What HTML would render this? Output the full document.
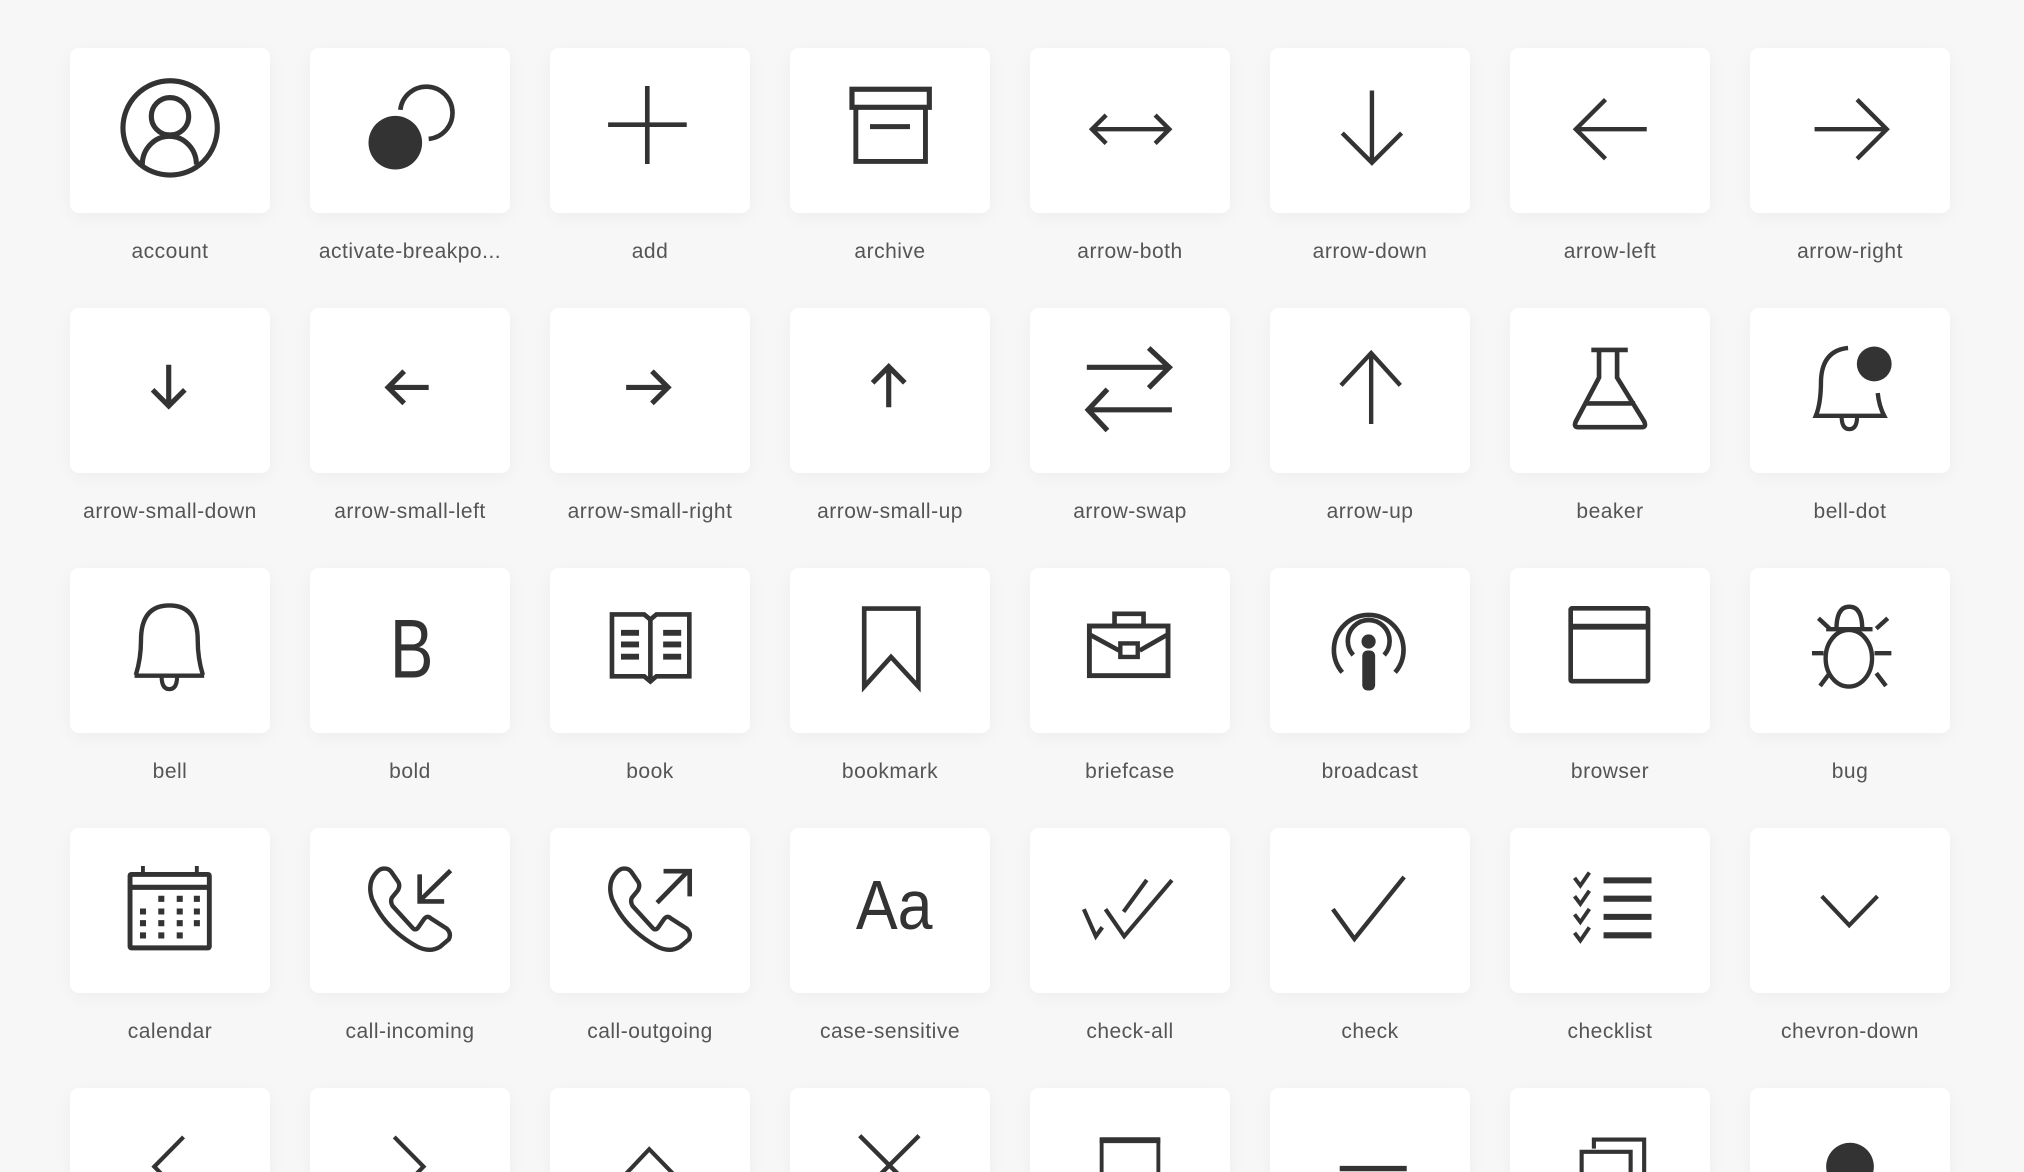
<!DOCTYPE html>
<html><head><meta charset="utf-8"><style>
html,body{margin:0;padding:0;width:2024px;height:1172px;overflow:hidden;}
body{background:#f7f7f7;font-family:"Liberation Sans",sans-serif;}
#wrap{position:relative;width:2024px;height:1172px;overflow:hidden;}
.t{position:absolute;width:200px;height:165px;background:#fff;border-radius:9px;box-shadow:0 4px 18px rgba(0,0,0,0.045);}
.t svg{position:absolute;left:0;top:0;width:200px;height:165px;}
.l{position:absolute;width:240px;margin-left:-20px;text-align:center;font-size:21px;letter-spacing:0.5px;color:#555;top:191px;left:0;line-height:26px;white-space:nowrap;}
svg{fill:none;stroke:#333;stroke-width:3.4;stroke-linecap:butt;stroke-linejoin:miter;overflow:visible;}
.f{fill:#333;stroke:none;}
.p{height:84px;border-radius:9px 9px 0 0;overflow:hidden;}
.p svg{overflow:hidden;}
</style></head><body><div id="wrap">

<!-- Row 1 -->
<div class="t" style="left:70px;top:48px"><svg viewBox="0 0 155 128"><circle cx="77.6" cy="62" r="36.6" stroke-width="4"/><circle cx="77.5" cy="53" r="14.5" stroke-width="4"/><path d="M56 90.5 A21 22 0 0 1 98 90.5" stroke-width="4"/></svg><div class="l">account</div></div>
<div class="t" style="left:310px;top:48px"><svg viewBox="0 0 155 128"><circle class="f" cx="66.1" cy="73.5" r="20.8"/><path d="M70 48 A20.3 20.3 0 1 1 92 70.5" stroke-width="3.6"/></svg><div class="l">activate-breakpo...</div></div>
<div class="t" style="left:550px;top:48px"><svg viewBox="0 0 155 128"><path d="M75.4 29.5V90M45 59.5H106" stroke-width="3.6"/></svg><div class="l">add</div></div>
<div class="t" style="left:790px;top:48px"><svg viewBox="0 0 155 128"><rect x="48" y="32" width="60" height="14" stroke-width="4"/><path d="M51 46V88H105V46M62 61H93" stroke-width="3.8"/></svg><div class="l">archive</div></div>
<div class="t" style="left:1030px;top:48px"><svg viewBox="0 0 155 128"><path d="M48 63H108M59 52L48 63L59 74M97 52L108 63L97 74" stroke-width="3.4"/></svg><div class="l">arrow-both</div></div>
<div class="t" style="left:1270px;top:48px"><svg viewBox="0 0 155 128"><path d="M79 33V89M56 66L79 89L102 66" stroke-width="3.4"/></svg><div class="l">arrow-down</div></div>
<div class="t" style="left:1510px;top:48px"><svg viewBox="0 0 155 128"><path d="M51 63H106M74 40L51 63L74 86" stroke-width="3.4"/></svg><div class="l">arrow-left</div></div>
<div class="t" style="left:1750px;top:48px"><svg viewBox="0 0 155 128"><path d="M50 63H106M83 40L106 63L83 86" stroke-width="3.4"/></svg><div class="l">arrow-right</div></div>

<!-- Row 2 -->
<div class="t" style="left:70px;top:308px"><svg viewBox="0 0 155 128"><path d="M76.5 44V76.5M64 63.5L76.5 76L89 63.5" stroke-width="4"/></svg><div class="l">arrow-small-down</div></div>
<div class="t" style="left:310px;top:308px"><svg viewBox="0 0 155 128"><path d="M60 61.6H92M73 49L60.5 61.6L73 74" stroke-width="4"/></svg><div class="l">arrow-small-left</div></div>
<div class="t" style="left:550px;top:308px"><svg viewBox="0 0 155 128"><path d="M59 61.6H91M79 49L91.5 61.6L79 74" stroke-width="4"/></svg><div class="l">arrow-small-right</div></div>
<div class="t" style="left:790px;top:308px"><svg viewBox="0 0 155 128"><path d="M76.5 45V77M64 58L76.5 45.5L89 58" stroke-width="4"/></svg><div class="l">arrow-small-up</div></div>
<div class="t" style="left:1030px;top:308px"><svg viewBox="0 0 155 128"><path d="M44 46H108M92 31L108 46L92 62M110 79H45M60 63L45 79L60 95" stroke-width="4"/></svg><div class="l">arrow-swap</div></div>
<div class="t" style="left:1270px;top:308px"><svg viewBox="0 0 155 128"><path d="M78.4 35V90M55 60L78.4 35L101 60" stroke-width="3.4"/></svg><div class="l">arrow-up</div></div>
<div class="t" style="left:1510px;top:308px"><svg viewBox="0 0 155 128"><path d="M63 32.5H91.3M69 34V54L51 88Q49 92.5 53 92.5H102Q106 92.5 104 88L83 54V34M58 74H97" stroke-width="3.6"/></svg><div class="l">beaker</div></div>
<div class="t" style="left:1750px;top:308px"><svg viewBox="0 0 155 128"><path d="M76 31Q56 33 55 56Q55 74 51 83.6H104Q100 76 99 66" stroke-width="3.4"/><path d="M71 84Q71 94 77 94Q83 94 83 84" stroke-width="3.2"/><circle class="f" cx="96.3" cy="43.4" r="13.5"/></svg><div class="l">bell-dot</div></div>

<!-- Row 3 -->
<div class="t" style="left:70px;top:568px"><svg viewBox="0 0 155 128"><path d="M50 83.5H104M51 83Q55 70 55 56Q55 29 77 29Q99 29 99 56Q99 70 103 83" stroke-width="3.4"/><path d="M71 84Q71 94 77 94Q83 94 83 84" stroke-width="3.2"/></svg><div class="l">bell</div></div>
<div class="t" style="left:310px;top:568px"><svg viewBox="0 0 155 128"><text x="101" y="85" transform="scale(0.78 1)" text-anchor="middle" font-family="Liberation Sans, sans-serif" font-size="65" fill="#333" stroke="none">B</text></svg><div class="l">bold</div></div>
<div class="t" style="left:550px;top:568px"><svg viewBox="0 0 155 128"><path d="M48 36H73L77.8 40L82.5 36H108V84H82.5L77.8 88L73 84H48Z M77.8 40V88" stroke-width="3.6"/><path class="f" d="M55 48h14v4.6h-14zM55 57h14v4.6h-14zM55 66.5h14v4.6h-14zM87.7 48h14v4.6h-14zM87.7 57h14v4.6h-14zM87.7 66.5h14v4.6h-14z"/></svg><div class="l">book</div></div>
<div class="t" style="left:790px;top:568px"><svg viewBox="0 0 155 128"><path d="M57.5 92V31.5H99.5V92L78.3 69Z" stroke-width="3.6"/></svg><div class="l">bookmark</div></div>
<div class="t" style="left:1030px;top:568px"><svg viewBox="0 0 155 128"><rect x="46" y="45" width="61" height="38.5" stroke-width="3.8"/><path d="M65.5 45V35.5H88V45M47 52L69 64M106 52L85 64" stroke-width="3.6"/><rect x="70" y="58.5" width="13.5" height="10.5" stroke-width="3.4"/></svg><div class="l">briefcase</div></div>
<div class="t" style="left:1270px;top:568px"><svg viewBox="0 0 155 128"><path d="M56 81A27 27 0 1 1 97 81" stroke-width="3.6"/><path d="M64.5 67.5A16.2 16.2 0 1 1 88.5 67.5" stroke-width="3.6"/><circle class="f" cx="76.4" cy="57" r="5.5"/><rect class="f" x="71.5" y="64" width="10" height="31" rx="4"/></svg><div class="l">broadcast</div></div>
<div class="t" style="left:1510px;top:568px"><svg viewBox="0 0 155 128"><rect x="47" y="31.3" width="60" height="56.5" rx="1" stroke-width="3.6"/><path d="M47 45.5H107" stroke-width="4.6"/></svg><div class="l">browser</div></div>
<div class="t" style="left:1750px;top:568px"><svg viewBox="0 0 155 128"><ellipse cx="76.6" cy="70" rx="18" ry="22" stroke-width="3.4"/><path d="M67 47.5Q67 30 77 30Q87 30 87 47.5M59 47.5H95M53 39L61.7 47M106.8 39L97.9 47M48 66.1H57M96.5 66.1H109.6M61.7 81.6L54.3 91.5M97.9 81.6L105.4 91.5" stroke-width="3.4"/></svg><div class="l">bug</div></div>

<!-- Row 4 -->
<div class="t" style="left:70px;top:828px"><svg viewBox="0 0 155 128"><rect x="46.5" y="36" width="61.5" height="57" rx="1" stroke-width="3.8"/><path d="M47 46H108" stroke-width="4"/><path d="M56.5 29.5V36M98.3 29.5V36" stroke-width="3"/><path class="f" d="M68.4 52.6h4.7v4.7h-4.7zM82.7 52.6h4.7v4.7h-4.7zM96 52.6h4.7v4.7h-4.7zM54.2 62.4h4.7v4.7h-4.7zM68.4 62.4h4.7v4.7h-4.7zM82.7 62.4h4.7v4.7h-4.7zM96 62.4h4.7v4.7h-4.7zM54.2 71.5h4.7v4.7h-4.7zM68.4 71.5h4.7v4.7h-4.7zM82.7 71.5h4.7v4.7h-4.7zM96 71.5h4.7v4.7h-4.7zM54.2 81h4.7v4.7h-4.7zM68.4 81h4.7v4.7h-4.7zM82.7 81h4.7v4.7h-4.7z"/></svg><div class="l">calendar</div></div>
<div class="t" style="left:310px;top:828px"><svg viewBox="0 0 155 128"><path d="M58 31.5Q61 31.5 63 34L68.5 42Q70 45 68 48.5L63.5 54Q62 57 64 60.5L79.5 77.5Q82 80 84 77L88.5 70.5Q91 67.5 93.5 70L106 78Q110 82 107.5 86.5L101 92Q93 97 83 92Q58 78 48 55Q44 42 52 34Q55 31 58 31.5Z" stroke-width="3.4" stroke-linejoin="round"/><path d="M109 33L86.5 55M85 36V57H104" stroke-width="3.6"/></svg><div class="l">call-incoming</div></div>
<div class="t" style="left:550px;top:828px"><svg viewBox="0 0 155 128"><path d="M58 31.5Q61 31.5 63 34L68.5 42Q70 45 68 48.5L63.5 54Q62 57 64 60.5L79.5 77.5Q82 80 84 77L88.5 70.5Q91 67.5 93.5 70L106 78Q110 82 107.5 86.5L101 92Q93 97 83 92Q58 78 48 55Q44 42 52 34Q55 31 58 31.5Z" stroke-width="3.4" stroke-linejoin="round"/><path d="M83 58L107 33.5M88 33.5H108.3V53" stroke-width="3.6"/></svg><div class="l">call-outgoing</div></div>
<div class="t" style="left:790px;top:828px"><svg viewBox="0 0 155 128"><text x="89.7" y="78.3" transform="scale(0.9 1)" text-anchor="middle" font-family="Liberation Sans, sans-serif" font-size="54" fill="#333" stroke="none">Aa</text></svg><div class="l">case-sensitive</div></div>
<div class="t" style="left:1030px;top:828px"><svg viewBox="0 0 155 128"><path d="M41.7 63L51 84L56 77M58.5 63L73 84L110 40.5M72.5 65L90.5 40.3" stroke-width="3.2"/></svg><div class="l">check-all</div></div>
<div class="t" style="left:1270px;top:828px"><svg viewBox="0 0 155 128"><path d="M48.7 63L65.4 86L104 38" stroke-width="3.4"/></svg><div class="l">check</div></div>
<div class="t" style="left:1510px;top:828px"><svg viewBox="0 0 155 128"><path d="M50 38.7L54.5 44.7L61.5 34.5M50 52.9L54.5 58.9L61.5 48.7M50 67L54.5 73L61.5 62.8M50 81.3L54.5 87.3L61.5 77.1" stroke-width="3"/><path class="f" d="M72.5 38.3h37.2v4.7h-37.2zM72.5 52.5h37.2v4.7h-37.2zM72.5 66.6h37.2v4.7h-37.2zM72.5 80.9h37.2v4.7h-37.2z"/></svg><div class="l">checklist</div></div>
<div class="t" style="left:1750px;top:828px"><svg viewBox="0 0 155 128"><path d="M55.6 52.9L76.9 75.5L98.8 52.9" stroke-width="3.2"/></svg><div class="l">chevron-down</div></div>

<!-- Row 5 (partial) -->
<div class="t p" style="left:70px;top:1088px"><svg viewBox="0 0 155 128"><path d="M88 38L65.3 61L88 84" stroke-width="3.2"/></svg></div>
<div class="t p" style="left:310px;top:1088px"><svg viewBox="0 0 155 128"><path d="M65.3 38L88 61L65.3 84" stroke-width="3.2"/></svg></div>
<div class="t p" style="left:550px;top:1088px"><svg viewBox="0 0 155 128"><path d="M55.6 70L76.9 47.5L98.8 70" stroke-width="3.2"/></svg></div>
<div class="t p" style="left:790px;top:1088px"><svg viewBox="0 0 155 128"><path d="M54 37L100 83M100 37L54 83" stroke-width="3.4"/></svg></div>
<div class="t p" style="left:1030px;top:1088px"><svg viewBox="0 0 155 128"><path d="M55.5 90V40.5H99.5V90" stroke-width="3"/><path d="M54 40.5H101" stroke-width="4.6"/></svg></div>
<div class="t p" style="left:1270px;top:1088px"><svg viewBox="0 0 155 128"><path d="M54 62.5H106" stroke-width="4.2"/></svg></div>
<div class="t p" style="left:1510px;top:1088px"><svg viewBox="0 0 155 128"><path d="M65 47V40H104V86" stroke-width="3.2"/><rect x="55.5" y="49.5" width="38" height="40" stroke-width="3.2"/></svg></div>
<div class="t p" style="left:1750px;top:1088px"><svg viewBox="0 0 155 128"><circle class="f" cx="77.5" cy="61" r="18.5"/></svg></div>

</div></body></html>
